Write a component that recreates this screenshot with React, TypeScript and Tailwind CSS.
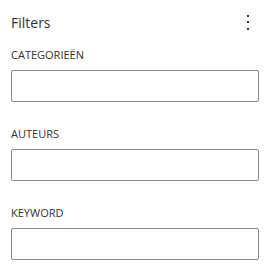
export default function App() {
  const fields = ['CATEGORIEËN', 'AUTEURS', 'KEYWORD'];

  return (
    <div className="w-[269px] h-[270px] bg-white text-[#323130] font-['Open_Sans',sans-serif]">
      {/* Header */}
      <div className="flex items-center justify-between pl-[11px] pr-[20px] pt-[13px]">
        <h2 className="text-[14px] leading-[20px]">Filters</h2>
        <button className="flex flex-col items-center gap-[4.5px] -mt-[2px]" aria-label="Meer opties">
          <span className="w-[2px] h-[2px] bg-[#323130]" />
          <span className="w-[2px] h-[2px] bg-[#323130]" />
          <span className="w-[2px] h-[2px] bg-[#323130]" />
        </button>
      </div>

      {/* Fields */}
      <div className="flex flex-col gap-[24px] px-[11px] pt-[14px]">
        {fields.map((f) => (
          <div key={f} className="flex flex-col">
            <label className="text-[11px] leading-[16px] mb-[7px]">{f}</label>
            <input className="h-[32px] w-[248px] border border-[#8a8886] rounded-[2px] outline-none" />
          </div>
        ))}
      </div>
    </div>
  );
}
